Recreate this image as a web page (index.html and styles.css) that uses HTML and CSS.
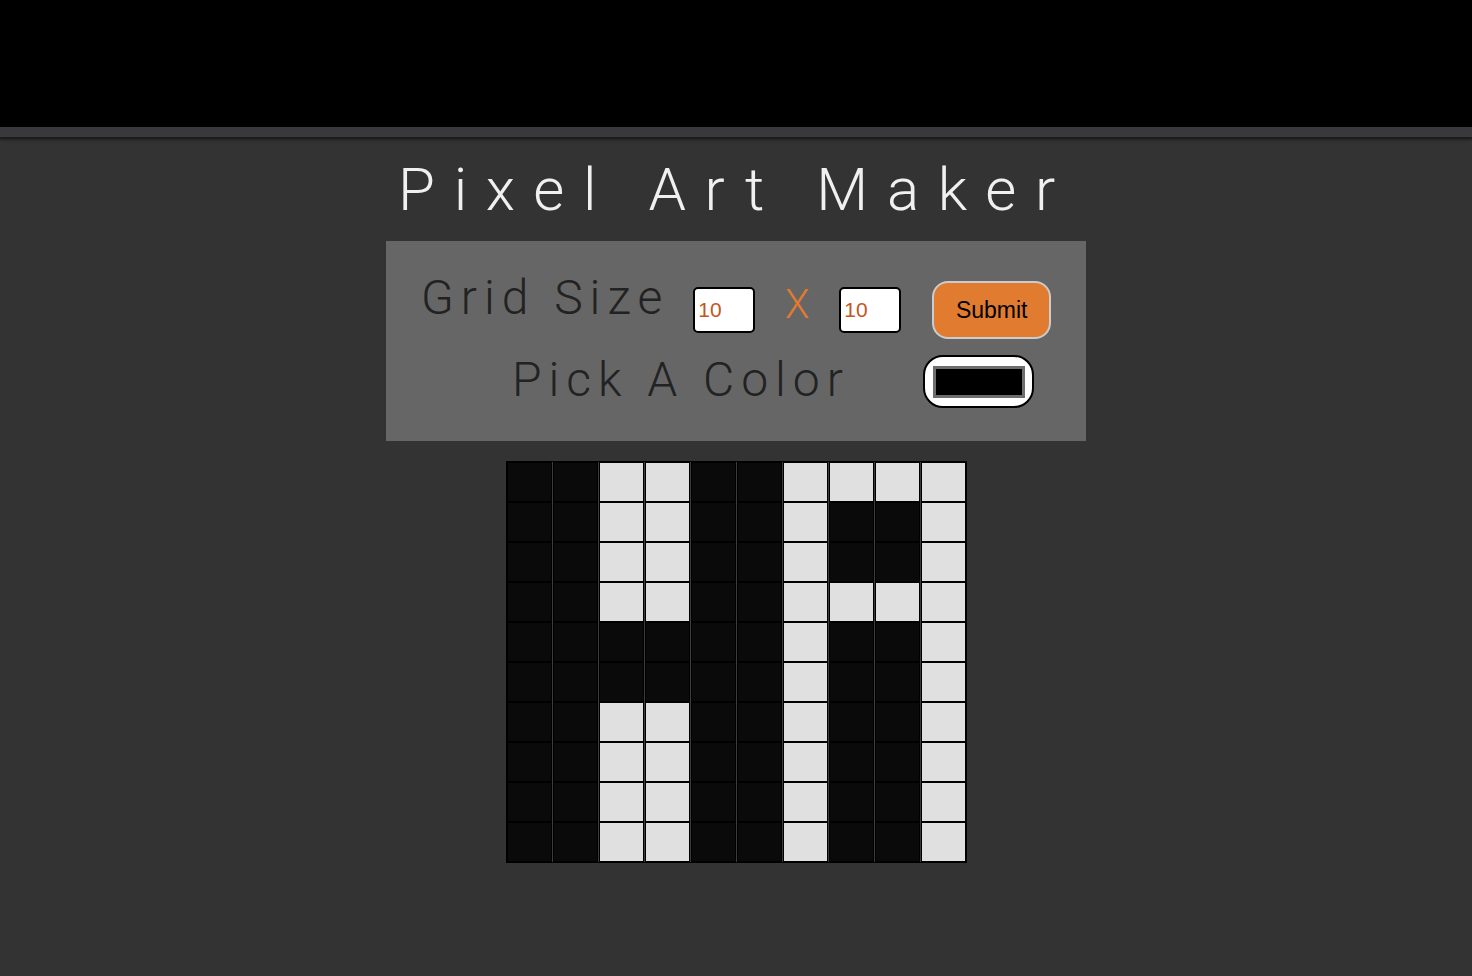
FILE: index.html
```html
<!DOCTYPE html>
<html lang="en">
<head>
<meta charset="utf-8">
<title>Pixel Art Maker</title>
<link rel="stylesheet" href="styles.css">
</head>
<body>
<header class="topbar"></header>
<div class="topbar-edge"></div>
<main class="page">
  <h1 class="title">Pixel Art Maker</h1>
  <form class="controls">
    <div class="row row-size">
      <label class="label label-size" for="height">Grid Size</label>
      <input class="num" id="height" type="number" value="10">
      <span class="times">X</span>
      <input class="num" id="width" type="number" value="10">
      <button class="submit" type="button">Submit</button>
    </div>
    <div class="row row-color">
      <label class="label label-color" for="color">Pick A Color</label>
      <input class="color" id="color" type="color" value="#000000">
    </div>
  </form>
  <div class="canvas">
    <div class="d"></div><div class="d"></div><div class="l"></div><div class="l"></div><div class="d"></div><div class="d"></div><div class="l"></div><div class="l"></div><div class="l"></div><div class="l"></div>
    <div class="d"></div><div class="d"></div><div class="l"></div><div class="l"></div><div class="d"></div><div class="d"></div><div class="l"></div><div class="d"></div><div class="d"></div><div class="l"></div>
    <div class="d"></div><div class="d"></div><div class="l"></div><div class="l"></div><div class="d"></div><div class="d"></div><div class="l"></div><div class="d"></div><div class="d"></div><div class="l"></div>
    <div class="d"></div><div class="d"></div><div class="l"></div><div class="l"></div><div class="d"></div><div class="d"></div><div class="l"></div><div class="l"></div><div class="l"></div><div class="l"></div>
    <div class="d"></div><div class="d"></div><div class="d"></div><div class="d"></div><div class="d"></div><div class="d"></div><div class="l"></div><div class="d"></div><div class="d"></div><div class="l"></div>
    <div class="d"></div><div class="d"></div><div class="d"></div><div class="d"></div><div class="d"></div><div class="d"></div><div class="l"></div><div class="d"></div><div class="d"></div><div class="l"></div>
    <div class="d"></div><div class="d"></div><div class="l"></div><div class="l"></div><div class="d"></div><div class="d"></div><div class="l"></div><div class="d"></div><div class="d"></div><div class="l"></div>
    <div class="d"></div><div class="d"></div><div class="l"></div><div class="l"></div><div class="d"></div><div class="d"></div><div class="l"></div><div class="d"></div><div class="d"></div><div class="l"></div>
    <div class="d"></div><div class="d"></div><div class="l"></div><div class="l"></div><div class="d"></div><div class="d"></div><div class="l"></div><div class="d"></div><div class="d"></div><div class="l"></div>
    <div class="d"></div><div class="d"></div><div class="l"></div><div class="l"></div><div class="d"></div><div class="d"></div><div class="l"></div><div class="d"></div><div class="d"></div><div class="l"></div>
  </div>
</main>
</body>
</html>
```

FILE: styles.css
```css
html, body {
  margin: 0;
  padding: 0;
}

body {
  background: #333333;
  font-family: "Liberation Sans", Arial, sans-serif;
  min-height: 976px;
}

.topbar {
  height: 127px;
  background: #000;
}

.topbar-edge {
  height: 10px;
  background: #39393b;
  border-bottom: 2px solid #1d1d1d;
  box-shadow: 0 1px 3px rgba(0, 0, 0, 0.4);
}

.page {
  display: flex;
  flex-direction: column;
  align-items: center;
}

.title {
  margin: 10px 0 0;
  height: 92px;
  font-family: Roboto, "Liberation Sans", sans-serif;
  font-weight: 300;
  font-size: 60px;
  line-height: 82px;
  letter-spacing: 18.7px;
  color: #f0f0f0;
  text-align: center;
}

.controls {
  width: 700px;
  height: 200px;
  box-sizing: border-box;
  background: #666666;
  display: flex;
  flex-direction: column;
  padding-top: 39px;
}

.row {
  display: flex;
  align-items: center;
}

.row-size {
  padding-left: 35px;
  height: 60px;
}

.row-color {
  padding-left: 126px;
  margin-top: 13px;
  height: 56px;
}

.label {
  font-family: Roboto, "Liberation Sans", sans-serif;
  font-weight: 300;
  font-size: 48px;
  letter-spacing: 7px;
  color: #222;
  line-height: 56px;
}

.label-size {
  margin-right: 24px;
  position: relative;
  top: -12px;
}

.label-color {
  margin-right: 73px;
  position: relative;
  top: -1px;
}

.num {
  width: 62px;
  height: 46px;
  box-sizing: border-box;
  border: 2px solid #000;
  border-radius: 5px;
  background: #fff;
  padding: 0 0 0 3px;
  font-family: "Liberation Sans", Arial, sans-serif;
  font-size: 21px;
  color: #c4561d;
  outline: none;
  -moz-appearance: textfield;
}

.num::-webkit-inner-spin-button,
.num::-webkit-outer-spin-button {
  -webkit-appearance: none;
  margin: 0;
}

.times {
  width: 84px;
  text-align: center;
  font-family: Roboto, "Liberation Sans", sans-serif;
  font-weight: 300;
  font-size: 40px;
  color: #e07b30;
  position: relative;
  top: -6px;
}

.submit {
  margin-left: 31px;
  width: 119px;
  height: 58px;
  box-sizing: border-box;
  border: 2px solid #cccccc;
  border-radius: 16px;
  background: #e07b30;
  color: #000;
  font-family: "Liberation Sans", Arial, sans-serif;
  font-size: 23px;
  padding: 0;
  cursor: pointer;
}

.color {
  -webkit-appearance: none;
  appearance: none;
  width: 111px;
  height: 53px;
  box-sizing: border-box;
  border: 2px solid #000;
  border-radius: 20px;
  background: #fff;
  padding: 0;
  cursor: pointer;
}

.color::-webkit-color-swatch-wrapper {
  padding: 9px 7px 8px 8px;
}

.color::-webkit-color-swatch {
  border: 3px solid #6e6e6e;
  border-radius: 0;
}

.canvas {
  margin-top: 20px;
  display: grid;
  grid-template-columns: repeat(10, 45px);
  grid-auto-rows: 40px;
  column-gap: 1px;
  border: 1px solid #000;
  background: #3c3c3c;
}

.canvas > div {
  box-sizing: border-box;
  border: 1px solid #000;
}

.canvas > .d {
  background: #0a0a0a;
}

.canvas > .l {
  background: #e0e0e0;
}
```
